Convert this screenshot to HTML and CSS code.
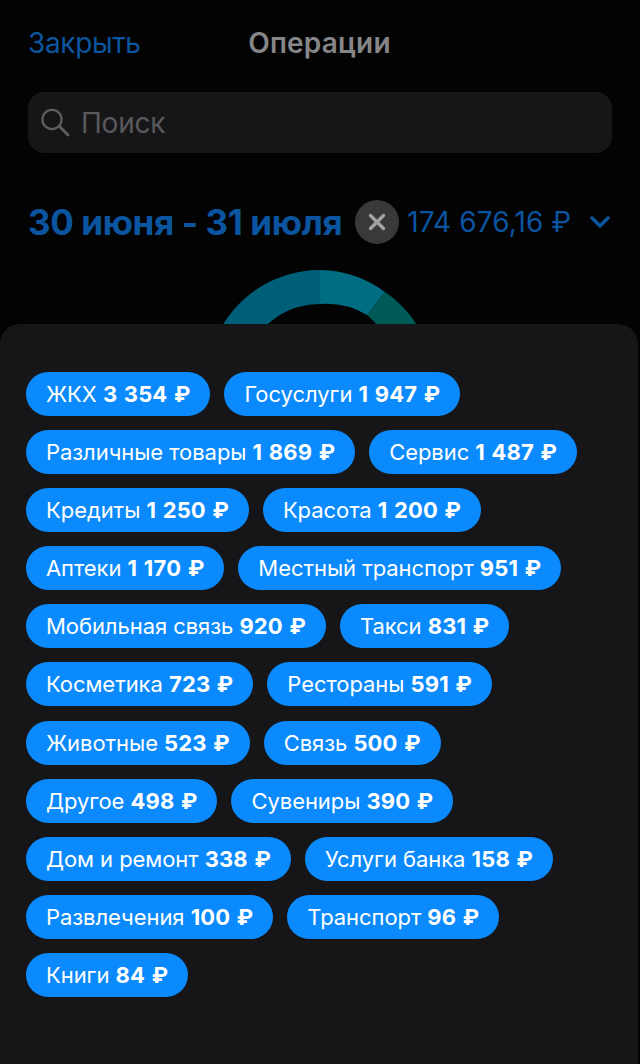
FILE: index.html
```html
<!DOCTYPE html>
<html lang="ru">
<head>
<meta charset="utf-8">
<title>Операции</title>
<link rel="stylesheet" href="styles.css">
</head>
<body>
<div class="screen">
  <header class="nav">
    <a class="close">Закрыть</a>
    <h1 class="title">Операции</h1>
  </header>
  <div class="search">
    <svg class="search-icon" viewBox="0 0 30 30" width="30" height="30" aria-hidden="true"><circle cx="11" cy="11.5" r="9.6" fill="none" stroke="#5f5f61" stroke-width="2.2"/><path d="M18.5 18.5l8.5 8.5" stroke="#5f5f61" stroke-width="2.8" stroke-linecap="round"/></svg>
    <span class="search-text">Поиск</span>
  </div>
  <div class="period">
    <span class="dates">30 июня - 31 июля</span>
    <span class="clear"><svg viewBox="0 0 18 18" width="18" height="18" aria-hidden="true"><path d="M2.5 2.5l13 13M15.5 2.5l-13 13" stroke="#a2a2a4" stroke-width="3.4" stroke-linecap="round"/></svg></span>
    <span class="sum">174 676,16 ₽</span>
    <svg class="chevron" viewBox="0 0 20 12" width="20" height="12" aria-hidden="true"><path d="M2 2l8 8 8-8" fill="none" stroke="#0b55a0" stroke-width="3.4" stroke-linecap="round" stroke-linejoin="round"/></svg>
  </div>
  <svg class="donut" viewBox="0 0 226 226" width="226" height="226" aria-hidden="true">
    <path d="M113 0A113 113 0 0 0 9 68L41 82A78 78 0 0 1 113 34Z" fill="#005f78"/>
    <path d="M113 0A113 113 0 0 1 178 22L160 45A78 78 0 0 0 113 34Z" fill="#006d82"/>
    <path d="M178 22A113 113 0 0 1 217 68L185 84A78 78 0 0 0 160 45Z" fill="#005a58"/>
  </svg>
  <section class="sheet">
    <div class="chip-row"><span class="chip">ЖКХ <b>3 354 ₽</b></span><span class="chip">Госуслуги <b>1 947 ₽</b></span></div>
    <div class="chip-row"><span class="chip">Различные товары <b>1 869 ₽</b></span><span class="chip">Сервис <b>1 487 ₽</b></span></div>
    <div class="chip-row"><span class="chip">Кредиты <b>1 250 ₽</b></span><span class="chip">Красота <b>1 200 ₽</b></span></div>
    <div class="chip-row"><span class="chip">Аптеки <b>1 170 ₽</b></span><span class="chip">Местный транспорт <b>951 ₽</b></span></div>
    <div class="chip-row"><span class="chip">Мобильная связь <b>920 ₽</b></span><span class="chip">Такси <b>831 ₽</b></span></div>
    <div class="chip-row"><span class="chip">Косметика <b>723 ₽</b></span><span class="chip">Рестораны <b>591 ₽</b></span></div>
    <div class="chip-row"><span class="chip">Животные <b>523 ₽</b></span><span class="chip">Связь <b>500 ₽</b></span></div>
    <div class="chip-row"><span class="chip">Другое <b>498 ₽</b></span><span class="chip">Сувениры <b>390 ₽</b></span></div>
    <div class="chip-row"><span class="chip">Дом и ремонт <b>338 ₽</b></span><span class="chip">Услуги банка <b>158 ₽</b></span></div>
    <div class="chip-row"><span class="chip">Развлечения <b>100 ₽</b></span><span class="chip">Транспорт <b>96 ₽</b></span></div>
    <div class="chip-row"><span class="chip">Книги <b>84 ₽</b></span></div>
  </section>
</div>
</body>
</html>
```
FILE: styles.css
```css
* { box-sizing: border-box; }
html, body { margin: 0; padding: 0; background: #030303; }
body { font-family: Inter, "Noto Sans", sans-serif; }
.screen {
  position: relative;
  width: 640px;
  height: 1064px;
  overflow: hidden;
  padding: 0 28px;
  background: #030303;
}
.nav {
  position: relative;
  display: flex;
  align-items: center;
  height: 28px;
  margin-top: 29px;
}
.close { font-size: 28px; color: #0c559f; letter-spacing: -0.35px; }
.title {
  position: absolute;
  left: 0;
  right: 0;
  margin: 0 0 0 -1px;
  text-align: center;
  font-size: 28px;
  font-weight: 600;
  letter-spacing: 0.2px;
  color: #868688;
}
.search {
  display: flex;
  align-items: center;
  gap: 10px;
  height: 61px;
  margin-top: 35px;
  padding-left: 13px;
  background: #161618;
  border-radius: 16px;
}
.search-text { font-size: 28px; color: #59595b; letter-spacing: -0.2px; }
.period {
  display: flex;
  align-items: center;
  height: 44px;
  margin-top: 47px;
}
.dates { font-size: 35px; font-weight: 700; color: #0b55a0; letter-spacing: -0.4px; white-space: nowrap; }
.clear {
  flex: none;
  display: flex;
  align-items: center;
  justify-content: center;
  width: 44px;
  height: 44px;
  margin-left: 13px;
  border-radius: 50%;
  background: #39393b;
}
.sum { margin-left: 8px; font-size: 28px; color: #0b55a0; letter-spacing: 0.1px; white-space: nowrap; }
.chevron { margin-left: 19px; flex: none; }
.donut { display: block; margin: 26px auto 0; }
.sheet {
  position: absolute;
  left: 0;
  right: 2px;
  top: 324px;
  bottom: 0;
  display: flex;
  flex-direction: column;
  gap: 14.1px;
  padding: 48px 0 0 26px;
  background: #161618;
  border-radius: 20px 20px 0 0;
}
.chip-row { display: flex; gap: 14px; }
.chip {
  display: flex;
  align-items: center;
  gap: 0.28em;
  height: 44px;
  padding: 0 20px;
  border-radius: 22px;
  background: #0a8afc;
  color: #fff;
  font-size: 22px;
  letter-spacing: -0.06px;
  white-space: nowrap;
}
.chip b { font-weight: 700; letter-spacing: 0.15px; word-spacing: 1.2px; font-kerning: none; }
```
